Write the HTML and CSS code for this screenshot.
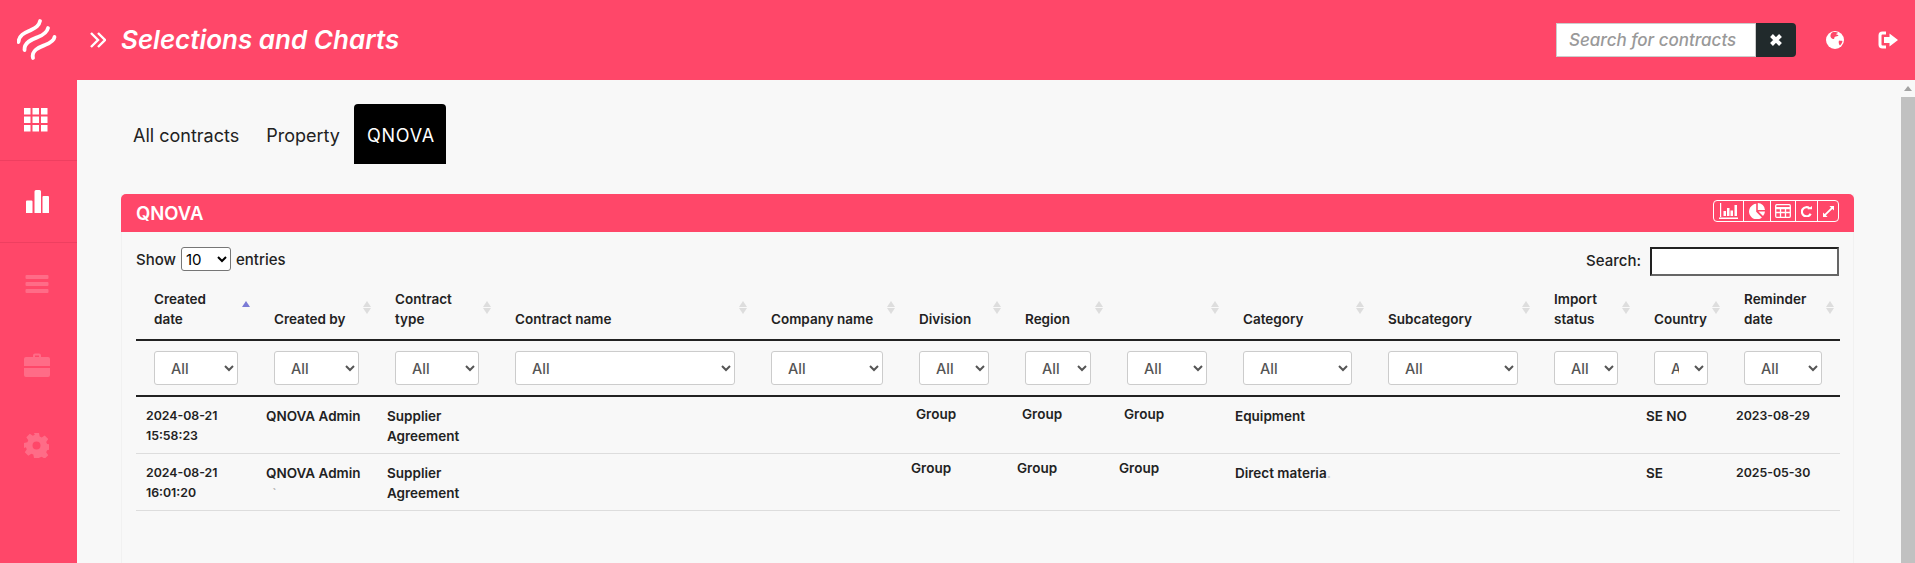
FILE: index.html
```html
<!DOCTYPE html>
<html lang="en">
<head>
  <meta charset="UTF-8" />
  <title>Selections and Charts</title>
  <link rel="stylesheet" href="styles.css">
</head>
<body>

  <header class="topbar">
    <div class="logo">
      <svg width="40" height="42" viewBox="0 0 40 42" fill="none" stroke="#fff" stroke-width="3.800" stroke-linecap="round">
        <path d="M1.500 23C2 15 10 13 14 11c5-2.500 8-4 9-9"/>
        <path d="M7.500 31C7 23 16 20 21 18c5-2 9-4 10-9"/>
        <path d="M16 39c-2-8 7-11 12-13 5-2 9-4 9.500-8"/>
      </svg>
    </div>
    <div class="page-title">
      <svg width="16" height="16" viewBox="0 0 16 16" fill="none" stroke="#fff" stroke-width="2.400">
        <path d="M1 1l7 7-7 7M8 1l7 7-7 7"/>
      </svg>
      <h1>Selections and Charts</h1>
    </div>
    <div class="top-search">
      <input type="text" placeholder="Search for contracts" />
      <button type="button">
        <svg width="14" height="14" viewBox="0 0 14 14" fill="none" stroke="#fff" stroke-width="4"><path d="M2.500 2.500l9 9M11.500 2.500l-9 9"/></svg>
      </button>
    </div>
    <a class="top-icon globe">
      <svg width="18" height="18" viewBox="0 0 18 18">
        <circle cx="9" cy="9" r="9" fill="#fff"/>
        <path d="M6 1.500c2-.8 5-.6 6 .3-.5 1-1.500.8-2 1.500.7.600 2 .4 2.500 1.200-.8 1.200-2.500.5-3.500 1.200-1 .7-.3 2-1.300 2.300C6.500 8.500 5 7 4.500 5.500 4.200 4 5 2.500 6 1.500zM13 9.500c1 .3 2.500 0 3.500.5-.3 1.800-1.200 3.400-2.500 4.500-1-.8-1.800-3.200-1-5z" fill="#ff4769"/>
      </svg>
    </a>
    <a class="top-icon signout">
      <svg width="20" height="18" viewBox="0 0 20 18" fill="none">
        <path d="M8 2H4.500A2.500 2.500 0 0 0 2 4.500v9A2.500 2.500 0 0 0 4.500 16H8" stroke="#fff" stroke-width="3"/>
        <path d="M11.500 2.500L20 9l-8.500 6.500V12H6V6h5.500z" fill="#fff"/>
      </svg>
    </a>
  </header>

  <div class="layout">
    <nav class="sidebar">
      <a class="nav-item first">
        <svg width="24" height="24" viewBox="0 0 24 24" fill="#fff">
          <rect x="0" y="0" width="6.500" height="6.500"/><rect x="8.500" y="0" width="6.500" height="6.500"/><rect x="17" y="0" width="6.500" height="6.500"/>
          <rect x="0" y="8.500" width="6.500" height="6.500"/><rect x="8.500" y="8.500" width="6.500" height="6.500"/><rect x="17" y="8.500" width="6.500" height="6.500"/>
          <rect x="0" y="17" width="6.500" height="6.500"/><rect x="8.500" y="17" width="6.500" height="6.500"/><rect x="17" y="17" width="6.500" height="6.500"/>
        </svg>
      </a>
      <a class="nav-item bars">
        <svg width="24" height="24" viewBox="0 0 24 24" fill="#fff">
          <path d="M0 11.500q0-1 1-1h4.500q1 0 1 1V23H0zM8.500 1.500q0-1.500 1.500-1.500h3.500q1.500 0 1.500 1.500V23H8.500zM16.500 7q0-1 1-1H22q1 0 1 1V23h-6.500z"/>
        </svg>
      </a>
      <a class="nav-item faded">
        <svg width="24" height="20" viewBox="0 0 24 20" fill="#fff">
          <rect x="0.500" y="1" width="23" height="4" rx="1"/><rect x="0.500" y="8" width="23" height="4" rx="1"/><rect x="0.500" y="15" width="23" height="4" rx="1"/>
        </svg>
      </a>
      <a class="nav-item faded">
        <svg width="26" height="24" viewBox="0 0 26 24" fill="#fff">
          <path d="M9 4V2.500Q9 .5 11 .5h4q2 0 2 2V4h-2V2.500h-4V4z"/>
          <path d="M2 4h22q2 0 2 2v7H0V6q0-2 2-2zM0 15h26v7q0 2-2 2H2q-2 0-2-2z"/>
        </svg>
      </a>
      <a class="nav-item faded">
        <svg width="25" height="25" viewBox="0 0 25 25">
          <path fill="#fff" fill-rule="evenodd" d="M10 0h5l.7 3.500 2 .9 3-2 3.500 3.500-2 3 .9 2 3.400.6v5l-3.400.7-.9 2 2 3-3.500 3.500-3-2-2 .9L15 25h-5l-.7-3.400-2-.9-3 2-3.500-3.500 2-3-.9-2L0 14.900v-5l3.400-.7.900-2-2-3 3.500-3.500 3 2 2-.9zM12.500 8.500a4 4 0 1 0 0 8 4 4 0 0 0 0-8z"/>
        </svg>
      </a>
    </nav>

    <main class="content">
      <div class="tabs">
        <a class="tab">All contracts</a>
        <a class="tab">Property</a>
        <a class="tab active">QNOVA</a>
      </div>

      <section class="panel">
        <div class="panel-head">
          <h2>QNOVA</h2>
          <div class="panel-tools">
            <button type="button" class="tool-chart">
              <svg width="20" height="16" viewBox="0 0 20 16" fill="#fff"><path d="M1 0h1.200v14H1zM0 14.500h19V16H0zM4.500 8h2.500v5H4.500zM8 5h2.500v8H8zM11.500 7.500H14V13h-2.500zM15.500 2H18v11h-2.500z"/></svg>
            </button>
            <button type="button" class="tool-pie">
              <svg width="16" height="16" viewBox="0 0 16 16" fill="#fff"><path d="M7.200.8v8l5.700 5.700A7.800 7.800 0 1 1 7.200.8zM8.800 0A7.500 7.500 0 0 1 16 7H8.800zM9.500 8.500H16a7.800 7.800 0 0 1-2 4.500z"/></svg>
            </button>
            <button type="button" class="tool-table">
              <svg width="16" height="14" viewBox="0 0 16 14" fill="none" stroke="#fff" stroke-width="1.300"><rect x=".7" y=".7" width="14.600" height="12.600" rx="1"/><path d="M.7 3.700h14.600v1H.7zM.7 8.500h14.600M5.500 3.700v9.600M10.500 3.700v9.600"/></svg>
            </button>
            <button type="button" class="tool-reload">
              <svg width="11" height="11" viewBox="0 0 12 12" fill="none"><path d="M10.500 8.500A5 5 0 1 1 9.200 2.500" stroke="#fff" stroke-width="2.400"/><path d="M7 3.500h5V0z" fill="#fff"/></svg>
            </button>
            <button type="button" class="tool-expand">
              <svg width="11" height="11" viewBox="0 0 12 12" fill="#fff"><path d="M7 0h5v5l-1.800-1.800L3.200 10.200 5 12H0V7l1.800 1.800 7-7z"/></svg>
            </button>
          </div>
        </div>

        <div class="panel-body">
          <div class="table-controls">
            <label>Show
              <select class="length-select"><option>10</option></select>
              entries</label>
            <label class="table-search">Search: <input type="text" /></label>
          </div>

          <table class="data-table">
            <colgroup>
              <col class="c-date"><col class="c-by"><col class="c-type"><col class="c-name"><col class="c-company"><col class="c-division"><col class="c-region"><col class="c-blank"><col class="c-category"><col class="c-sub"><col class="c-import"><col class="c-country"><col class="c-reminder">
            </colgroup>
            <thead>
              <tr class="head-row">
                <th class="sorted">Created<br>date</th>
                <th>Created by</th>
                <th>Contract<br>type</th>
                <th>Contract name</th>
                <th>Company name</th>
                <th>Division</th>
                <th>Region</th>
                <th></th>
                <th>Category</th>
                <th>Subcategory</th>
                <th>Import<br>status</th>
                <th>Country</th>
                <th>Reminder<br>date</th>
              </tr>
              <tr class="filter-row">
                <td><select><option>All</option></select></td>
                <td><select><option>All</option></select></td>
                <td><select><option>All</option></select></td>
                <td><select><option>All</option></select></td>
                <td><select><option>All</option></select></td>
                <td><select><option>All</option></select></td>
                <td><select><option>All</option></select></td>
                <td><select><option>All</option></select></td>
                <td><select><option>All</option></select></td>
                <td><select><option>All</option></select></td>
                <td><select><option>All</option></select></td>
                <td><select><option>All</option></select></td>
                <td><select><option>All</option></select></td>
              </tr>
            </thead>
            <tbody>
              <tr>
                <td class="date">2024-08-21<br>15:58:23</td>
                <td>QNOVA Admin</td>
                <td>Supplier<br>Agreement</td>
                <td></td>
                <td></td>
                <td class="group indent">Group</td>
                <td class="group indent">Group</td>
                <td class="group indent">Group</td>
                <td>Equipment</td>
                <td></td>
                <td></td>
                <td>SE NO</td>
                <td class="date">2023-08-29</td>
              </tr>
              <tr class="second">
                <td class="date">2024-08-21<br>16:01:20</td>
                <td>QNOVA Admin<br><span class="speck">`</span></td>
                <td>Supplier<br>Agreement</td>
                <td></td>
                <td></td>
                <td class="group">Group</td>
                <td class="group">Group</td>
                <td class="group">Group</td>
                <td>Direct materia<span class="faint">.</span></td>
                <td></td>
                <td></td>
                <td>SE</td>
                <td class="date">2025-05-30</td>
              </tr>
            </tbody>
          </table>
        </div>
      </section>
    </main>

    <div class="scrollbar">
      <span class="scroll-arrow"></span>
      <span class="scroll-thumb"></span>
    </div>
  </div>

</body>
</html>
```

FILE: styles.css
```css
* {
  box-sizing: border-box;
}

html, body {
  height: 100%;
}

body {
  margin: 0;
  overflow: hidden;
  display: flex;
  flex-direction: column;
  font-family: "Inter", "Liberation Sans", sans-serif;
  background-color: #f8f8f8;
  color: #222;
}

/* Top bar */
.topbar {
  flex: 0 0 80px;
  display: flex;
  align-items: center;
  background-color: #ff4769;
  color: white;
}

.logo {
  width: 77px;
  padding-left: 17px;
  display: flex;
}

.page-title {
  flex: 1;
  display: flex;
  align-items: center;
  gap: 15px;
  padding-left: 13px;
}

.page-title h1 {
  margin: 0 0 2px;
  font-size: 26px;
  font-weight: 600;
  font-style: italic;
}

.top-search {
  display: flex;
  height: 34px;
  margin-right: 30px;
}

.top-search input {
  width: 200px;
  padding: 0 12px;
  border: 1px solid #ccc;
  font-family: inherit;
  font-size: 17px;
  font-style: italic;
  font-weight: 500;
}

.top-search input::placeholder {
  color: #999;
}

.top-search button {
  width: 40px;
  border: none;
  border-radius: 0 4px 4px 0;
  background-color: #212a2c;
  display: flex;
  align-items: center;
  justify-content: center;
}

.top-icon {
  display: flex;
}

.globe {
  margin-right: 34px;
}

.signout {
  margin-right: 17px;
}

/* Sidebar */
.layout {
  flex: 1;
  min-height: 0;
  display: flex;
}

.sidebar {
  flex: 0 0 77px;
  background-color: #ff4769;
}

.nav-item {
  height: 82px;
  padding-right: 6px;
  display: flex;
  align-items: center;
  justify-content: center;
  border-bottom: 1px solid #ee3f60;
}

.nav-item.first {
  height: 81px;
}

.nav-item.bars {
  padding-right: 2px;
}

.nav-item.faded {
  height: 81px;
  padding-right: 4px;
  border-bottom: none;
}

.nav-item.faded svg {
  opacity: 0.2;
}

/* Content */
.content {
  flex: 1;
  min-width: 0;
  display: flex;
  flex-direction: column;
  padding: 24px 47px 0 44px;
}

.tabs {
  display: flex;
  gap: 3px;
  margin-bottom: 30px;
}

.tab {
  height: 60px;
  padding: 2px 12px 0;
  display: flex;
  align-items: center;
  border-radius: 4px 4px 0 0;
  font-size: 18px;
  color: #222;
}

.tab.active {
  margin-left: -1px;
  padding: 2px 11px 0 13px;
  background-color: black;
  color: white;
  letter-spacing: 0.8px;
}

.panel {
  flex: 1;
  min-height: 0;
  border-right: 1px solid #f1f1f1;
  border-left: 1px solid #f1f1f1;
}

.panel-head {
  height: 38px;
  margin: 0 -1px;
  padding: 0 15px;
  display: flex;
  align-items: flex-start;
  justify-content: space-between;
  background-color: #ff4769;
  border-radius: 5px 5px 0 0;
  color: white;
}

.panel-head h2 {
  margin: 0;
  font-size: 18.500px;
  line-height: 38px;
  font-weight: 600;
}

.panel-tools {
  display: flex;
  margin-top: 6px;
  height: 22px;
  border: 1px solid white;
  border-radius: 4px;
}

.panel-tools button {
  padding: 0;
  background: none;
  border: none;
  border-right: 1px solid white;
  display: flex;
  align-items: center;
  justify-content: center;
}

.panel-tools button:last-child {
  border-right: none;
}

.tool-chart { width: 30px; }
.tool-pie { width: 27px; }
.tool-table { width: 25px; }
.tool-reload { width: 22px; }
.tool-expand { width: 20px; }

.panel-body {
  padding: 15px 14px 0 14px;
}

.table-controls {
  display: flex;
  justify-content: space-between;
  align-items: flex-start;
  height: 32px;
  font-size: 15px;
  font-weight: 500;
}

.length-select {
  width: 50px;
  height: 24px;
  margin: 0 1px;
  border: 1px solid #767676;
  border-radius: 3px;
  background-color: white;
  font-family: inherit;
  font-size: 15px;
}

.table-search input {
  width: 189px;
  height: 29px;
  margin-left: 5px;
  border-style: solid;
  border-width: 2px;
  border-color: #222 #666 #666 #222;
  background-color: white;
}

/* Table */
.data-table {
  width: 100%;
  table-layout: fixed;
  border-collapse: collapse;
  font-size: 13.500px;
  line-height: 20px;
}

.c-date { width: 120px; }
.c-by { width: 121px; }
.c-type { width: 120px; }
.c-name { width: 256px; }
.c-company { width: 148px; }
.c-division { width: 106px; }
.c-region { width: 102px; }
.c-blank { width: 116px; }
.c-category { width: 145px; }
.c-sub { width: 166px; }
.c-import { width: 100px; }
.c-country { width: 90px; }
.c-reminder { width: 114px; }

.head-row th {
  position: relative;
  padding: 10px 0 10px 18px;
  text-align: left;
  vertical-align: bottom;
  font-weight: 600;
  border-bottom: 2px solid #222;
}

/* sort arrows */
.head-row th::before,
.head-row th::after {
  content: "";
  position: absolute;
  right: 6px;
  border-left: 4px solid transparent;
  border-right: 4px solid transparent;
}

.head-row th::before {
  top: 22px;
  border-bottom: 6px solid #ddd;
}

.head-row th::after {
  top: 29px;
  border-top: 6px solid #ddd;
}

.head-row th.sorted::before {
  border-bottom-color: #7b7bd6;
}

.head-row th.sorted::after {
  border-top-color: transparent;
}

.filter-row td {
  padding: 10px 18px 10px;
  border-bottom: 2px solid #222;
}

.filter-row select {
  width: 100%;
  height: 34px;
  padding: 0 12px;
  border: 1px solid #ccc;
  border-radius: 3px;
  background-color: white;
  font-family: inherit;
  font-size: 14.500px;
  font-weight: 500;
  color: #555;
}

.data-table tbody td {
  padding: 9px 10px 7px;
  vertical-align: top;
  font-weight: 600;
  border-bottom: 1px solid #ddd;
}

.data-table tbody td.date {
  font-size: 12.300px;
}

.data-table tbody td.group {
  padding-top: 7px;
}

.data-table tbody td.indent {
  padding-left: 15px;
}

.data-table .second td {
  padding-top: 9px;
}

.data-table tbody .second td.group {
  padding-top: 4px;
}

.speck {
  margin-left: 6px;
  color: #bbb;
}

.faint {
  color: #ccc;
}

/* Scrollbar */
.scrollbar {
  flex: 0 0 14px;
  display: flex;
  flex-direction: column;
  align-items: center;
  background-color: #f8f8f8;
}

.scroll-arrow {
  margin-top: 6px;
  border-left: 4px solid transparent;
  border-right: 4px solid transparent;
  border-bottom: 5px solid #a3a3a3;
}

.scroll-thumb {
  flex: 1;
  width: 100%;
  margin-top: 6px;
  background-color: #c1c1c1;
}
```
